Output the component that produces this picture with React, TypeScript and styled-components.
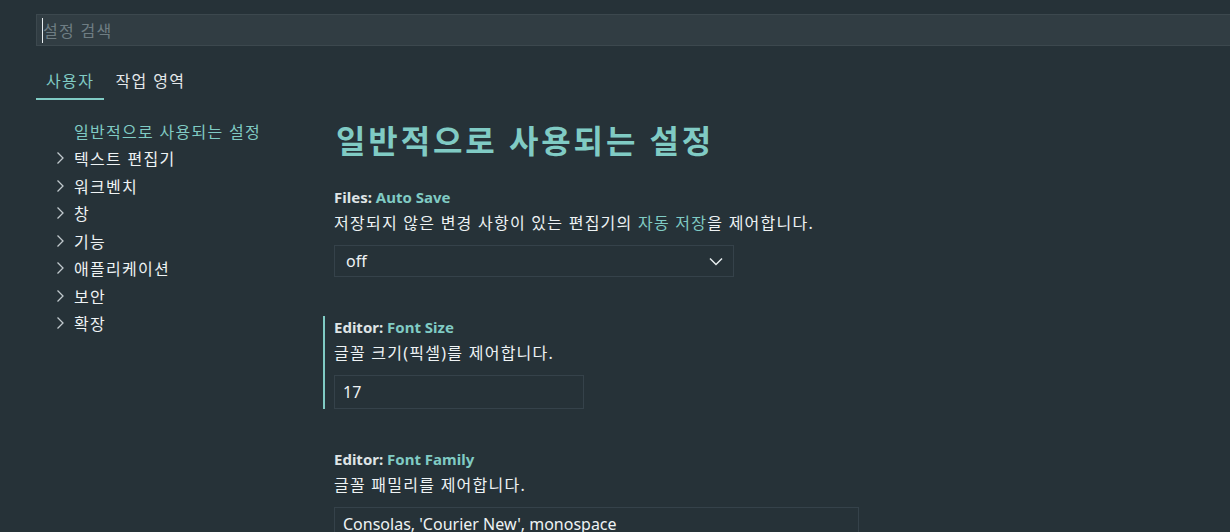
import React from "react";
import styled, { createGlobalStyle } from "styled-components";

const FONT = `"Noto Sans", "Noto Sans CJK KR", sans-serif`;
const ACCENT = "#80cbc4";
const BG = "#263238";
const FG = "#eef3f4";

const Global = createGlobalStyle`
  html, body { margin: 0; padding: 0; background: ${BG}; overflow: hidden; }
  body { font-family: ${FONT}; color: ${FG}; }
  * { box-sizing: border-box; }
`;

const Page = styled.div`
  width: 1230px;
  height: 532px;
  padding: 14px 0 0 36px;
  display: flex;
  flex-direction: column;
  & > * { flex-shrink: 0; }
`;

const SearchBox = styled.div`
  height: 32px;
  background: #313d43;
  border: 1px solid #3c484e;
  border-right: none;
  display: flex;
  align-items: center;
  padding-left: 5px;
`;

const Caret = styled.span`
  width: 1px;
  height: 25px;
  background: #e8eef0;
`;

const Placeholder = styled.span`
  font-size: 16px;
  letter-spacing: 1.3px;
  color: #6f7d83;
`;

const Tabs = styled.div`
  display: flex;
  margin-top: 16px;
  gap: 1px;
`;

const Tab = styled.div<{ $active?: boolean }>`
  padding: 0 10px;
  height: 38px;
  display: flex;
  align-items: center;
  font-size: 16px;
  letter-spacing: 1.4px;
  color: ${(p) => (p.$active ? ACCENT : "#e4e8ea")};
  border-bottom: 2px solid ${(p) => (p.$active ? ACCENT : "transparent")};
`;

const Body = styled.div`
  display: flex;
  margin-top: 17px;
`;

const Toc = styled.div`
  width: 298px;
  display: flex;
  flex-direction: column;
`;

const TocRow = styled.div<{ $active?: boolean }>`
  height: 27.5px;
  display: flex;
  align-items: center;
  padding-left: 20px;
  font-size: 16px;
  letter-spacing: 1.3px;
  color: ${(p) => (p.$active ? ACCENT : FG)};
`;

const Chevron = styled.span`
  width: 18px;
  display: flex;
  align-items: center;
  color: #c0c8cc;
`;

const Content = styled.div`
  flex: 1;
  display: flex;
  flex-direction: column;
`;

const Heading = styled.h1`
  margin: 1px 0 0;
  height: 46px;
  font-size: 32px;
  font-weight: 700;
  letter-spacing: 2.9px;
  color: ${ACCENT};
  line-height: 46px;
  padding-left: 2px;
`;

const Items = styled.div`
  display: flex;
  flex-direction: column;
  gap: 39px;
  margin-top: 22px;
  margin-left: -11px;
`;

const Item = styled.div<{ $focused?: boolean }>`
  border-left: 2px solid ${(p) => (p.$focused ? ACCENT : "transparent")};
  padding-left: 9px;
  display: flex;
  flex-direction: column;
`;

const Title = styled.div`
  height: 22px;
  font-size: 15px;
  line-height: 22px;
  font-weight: 700;
  color: #dfe4e6;
`;

const Key = styled.span`
  color: ${ACCENT};
`;

const Desc = styled.div`
  height: 26px;
  margin-top: 2px;
  font-size: 16px;
  line-height: 26px;
  letter-spacing: 1.25px;
  color: ${FG};
  white-space: nowrap;
`;

const Link = styled.span`
  color: ${ACCENT};
`;

const Select = styled.div`
  margin-top: 9px;
  width: 400px;
  height: 32px;
  border: 1px solid #35424a;
  background: ${BG};
  display: flex;
  align-items: center;
  justify-content: space-between;
  padding: 0 10px 0 11px;
  font-size: 16px;
  color: ${FG};
`;

const Input = styled.div<{ $w: number }>`
  margin-top: 9px;
  width: ${(p) => p.$w}px;
  height: 34px;
  border: 1px solid #35424a;
  display: flex;
  align-items: center;
  padding-left: 8px;
  font-size: 16px;
  color: ${FG};
  white-space: nowrap;
`;

const ChevronRight = () => (
  <svg width="9" height="14" viewBox="0 0 9 14" fill="none">
    <path d="M1.5 1.5L7 7L1.5 12.5" stroke="currentColor" strokeWidth="1.3" />
  </svg>
);

const ChevronDown = () => (
  <svg width="14" height="9" viewBox="0 0 14 9" fill="none">
    <path d="M1 1.5L7 7.5L13 1.5" stroke="#e6ecee" strokeWidth="1.5" />
  </svg>
);

const tocItems = ["텍스트 편집기", "워크벤치", "창", "기능", "애플리케이션", "보안", "확장"];

export default function App() {
  return (
    <>
      <Global />
      <Page>
        <SearchBox>
          <Caret />
          <Placeholder>설정 검색</Placeholder>
        </SearchBox>
        <Tabs>
          <Tab $active>사용자</Tab>
          <Tab>작업 영역</Tab>
        </Tabs>
        <Body>
          <Toc>
            <TocRow $active>
              <Chevron />
              일반적으로 사용되는 설정
            </TocRow>
            {tocItems.map((t) => (
              <TocRow key={t}>
                <Chevron>
                  <ChevronRight />
                </Chevron>
                {t}
              </TocRow>
            ))}
          </Toc>
          <Content>
            <Heading>일반적으로 사용되는 설정</Heading>
            <Items>
              <Item>
                <Title>
                  Files: <Key>Auto Save</Key>
                </Title>
                <Desc>
                  저장되지 않은 변경 사항이 있는 편집기의 <Link>자동 저장</Link>을 제어합니다.
                </Desc>
                <Select>
                  <span>off</span>
                  <ChevronDown />
                </Select>
              </Item>
              <Item $focused>
                <Title>
                  Editor: <Key>Font Size</Key>
                </Title>
                <Desc>글꼴 크기(픽셀)를 제어합니다.</Desc>
                <Input $w={250}>17</Input>
              </Item>
              <Item>
                <Title>
                  Editor: <Key>Font Family</Key>
                </Title>
                <Desc>글꼴 패밀리를 제어합니다.</Desc>
                <Input $w={525}>Consolas, 'Courier New', monospace</Input>
              </Item>
            </Items>
          </Content>
        </Body>
      </Page>
    </>
  );
}
